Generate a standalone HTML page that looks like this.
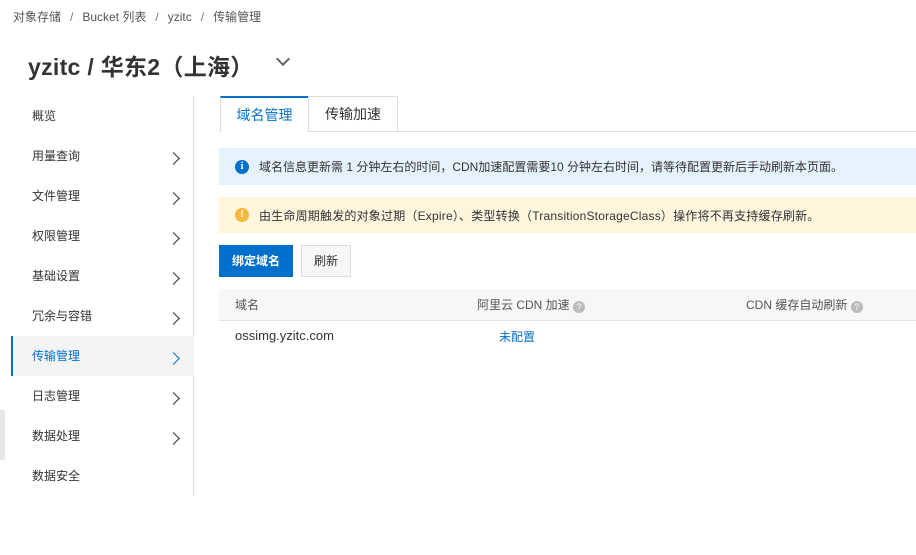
<!DOCTYPE html>
<html><head><meta charset="utf-8"><style>
*{box-sizing:border-box;margin:0;padding:0}
body{width:916px;height:555px;background:#fff;font-family:"Liberation Sans","Noto Sans CJK SC",sans-serif;color:#333;position:relative;overflow:hidden;font-size:12px}
.a{position:absolute;white-space:nowrap}
.crumb{left:13px;top:8px;font-size:12px;color:#555}
.crumb span{color:#777;margin:0 9px}
.title{left:28px;top:48px;font-size:23px;font-weight:bold;color:#333;letter-spacing:0.3px}
.side{left:0;top:96px;width:194px;height:400px;border-right:1px solid #ddd}
.item{position:absolute;left:11px;width:183px;height:40px;line-height:40px;padding-left:21px;font-size:12px;color:#333}
.item.act{background:#f4f4f4;border-left:2px solid #0070cc;padding-left:19px;color:#0070cc}
.chev{position:absolute;right:16px;top:18px;width:9px;height:9px;border-right:1.5px solid #333;border-top:1.5px solid #333;transform:rotate(45deg)}
.act .chev{border-color:#0070cc}
.tab{top:96px;height:36px;line-height:35px;font-size:14px;text-align:center;border:1px solid #ddd;background:#fff}
</style></head><body>
<div class="a crumb">对象存储<span>/</span>Bucket 列表<span>/</span>yzitc<span>/</span>传输管理</div>
<div class="a title">yzitc / 华东2（上海）</div>
<div class="a" style="left:278px;top:54px;width:10px;height:10px;border-right:2px solid #666;border-bottom:2px solid #666;transform:rotate(45deg)"></div>
<div class="a side"></div>
<div class="item" style="top:96px">概览</div>
<div class="item" style="top:136px">用量查询<i class="chev"></i></div>
<div class="item" style="top:176px">文件管理<i class="chev"></i></div>
<div class="item" style="top:216px">权限管理<i class="chev"></i></div>
<div class="item" style="top:256px">基础设置<i class="chev"></i></div>
<div class="item" style="top:296px">冗余与容错<i class="chev"></i></div>
<div class="item act" style="top:336px">传输管理<i class="chev"></i></div>
<div class="item" style="top:376px">日志管理<i class="chev"></i></div>
<div class="item" style="top:416px">数据处理<i class="chev"></i></div>
<div class="item" style="top:456px">数据安全</div>
<div class="a" style="left:0;top:410px;width:5px;height:50px;background:#e8e8e8"></div>
<div class="a" style="left:219px;top:131px;width:697px;border-top:1px solid #ddd"></div>
<div class="a tab" style="left:220px;width:89px;border-top:2px solid #0070cc;border-bottom-color:#fff;color:#0070cc">域名管理</div>
<div class="a tab" style="left:308px;width:90px;color:#333">传输加速</div>
<div class="a" style="left:219px;top:148px;width:697px;height:37px;background:#e5f2fd"></div>
<div class="a" style="left:235px;top:160px;width:14px;height:14px;border-radius:50%;background:#0070cc;color:#fff;font-size:10px;font-weight:bold;text-align:center;line-height:14px;font-family:'Liberation Serif',serif">i</div>
<div class="a" style="left:259px;top:158px;font-size:12px;color:#333">域名信息更新需 1 分钟左右的时间，CDN加速配置需要10 分钟左右时间，请等待配置更新后手动刷新本页面。</div>
<div class="a" style="left:219px;top:197px;width:697px;height:36px;background:#fdf5dc"></div>
<div class="a" style="left:235px;top:208px;width:14px;height:14px;border-radius:50%;background:#f6b73c;color:#fff;font-size:10px;font-weight:bold;text-align:center;line-height:14px">!</div>
<div class="a" style="left:259px;top:207px;font-size:12px;color:#333;letter-spacing:0.2px">由生命周期触发的对象过期（Expire）、类型转换（TransitionStorageClass）操作将不再支持缓存刷新。</div>
<div class="a" style="left:219px;top:245px;width:74px;height:32px;background:#0070cc;color:#fff;font-weight:bold;text-align:center;line-height:32px">绑定域名</div>
<div class="a" style="left:301px;top:245px;width:50px;height:32px;border:1px solid #ddd;background:#f7f7f7;text-align:center;line-height:30px;color:#333">刷新</div>
<div class="a" style="left:219px;top:289px;width:697px;height:32px;background:#f7f7f7;border-bottom:1px solid #e3e3e3"></div>
<div class="a" style="left:235px;top:296px;font-size:12px;color:#555">域名</div>
<div class="a" style="left:477px;top:296px;font-size:12px;color:#555">阿里云 CDN 加速 <span style="display:inline-block;width:12px;height:12px;border-radius:50%;background:#bbb;color:#fff;font-size:9px;text-align:center;line-height:12px;vertical-align:-1px">?</span></div>
<div class="a" style="left:746px;top:296px;font-size:12px;color:#555">CDN 缓存自动刷新 <span style="display:inline-block;width:12px;height:12px;border-radius:50%;background:#bbb;color:#fff;font-size:9px;text-align:center;line-height:12px;vertical-align:-1px">?</span></div>
<div class="a" style="left:235px;top:328px;font-size:13px;color:#333">ossimg.yzitc.com</div>
<div class="a" style="left:499px;top:328px;font-size:12px;color:#0070cc">未配置</div>
</body></html>
